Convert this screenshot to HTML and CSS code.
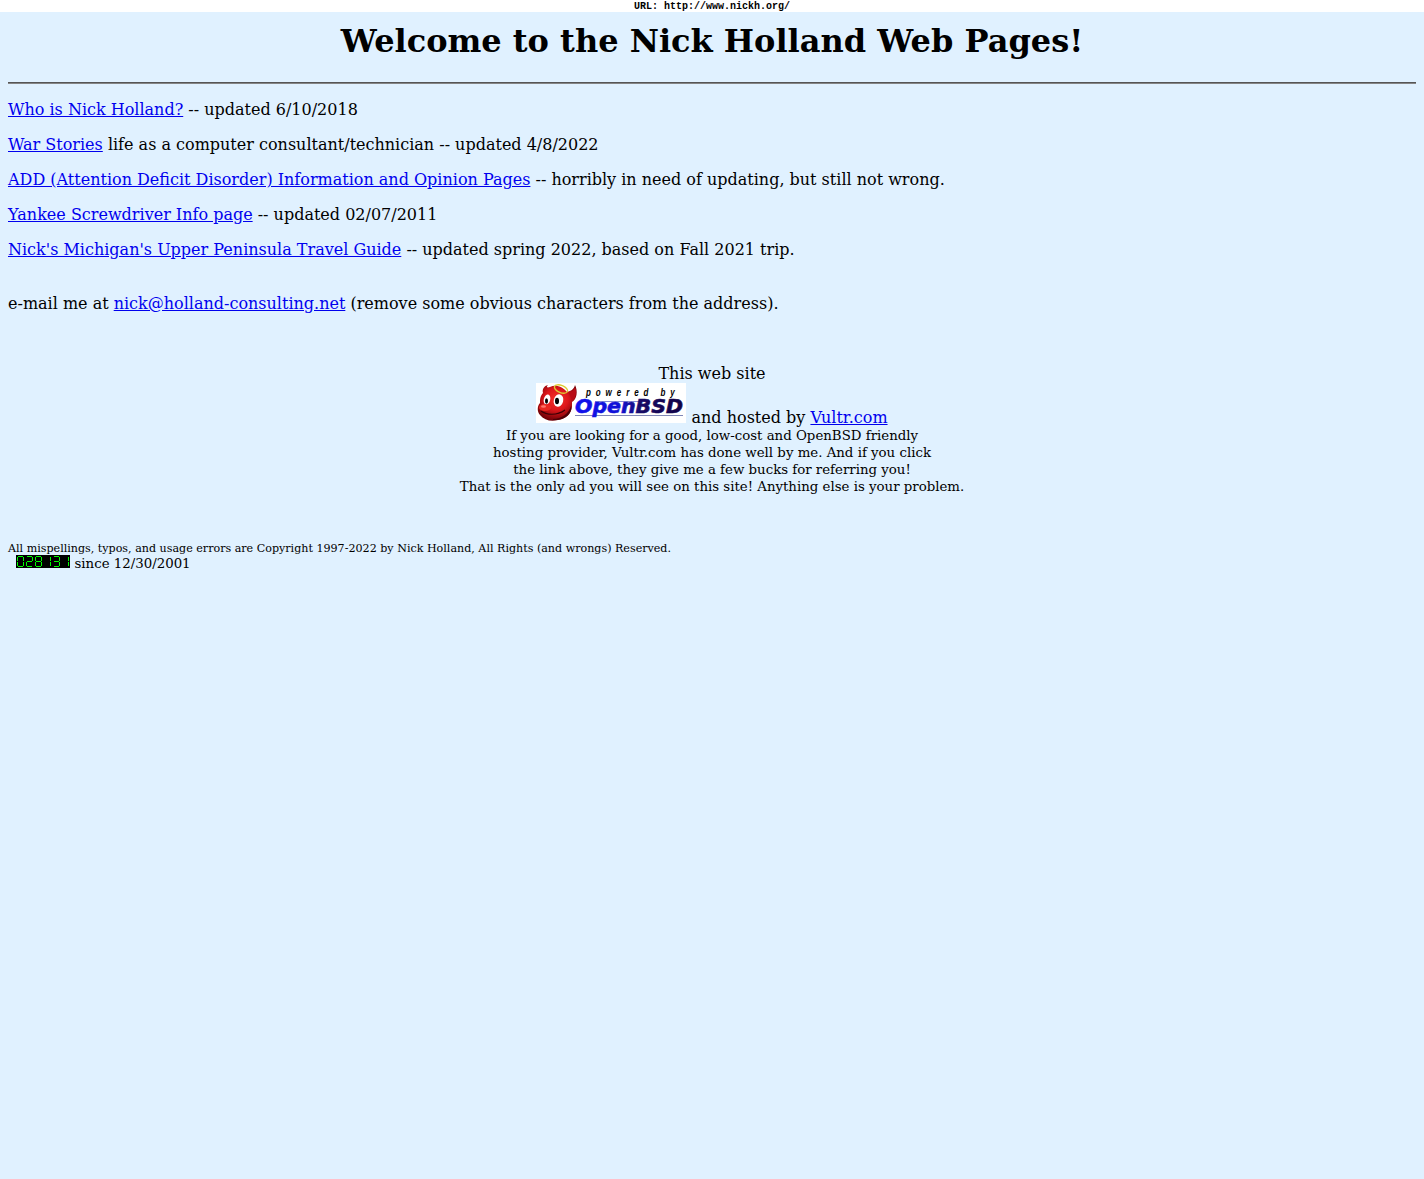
FILE: index.html
```html
<!DOCTYPE html>
<html lang="en">
<head>
<meta charset="utf-8">
<title>Nick Holland Web Pages</title>
<link rel="stylesheet" href="styles.css">
</head>
<body>
<header class="url">URL: http://www.nickh.org/</header>
<main class="page">
<h1 class="title">Welcome to the Nick Holland Web Pages!</h1>
<hr class="rule">
<p><a href="#">Who is Nick Holland?</a> -- updated 6/10/2018</p>
<p><a href="#">War Stories</a> life as a computer consultant/technician -- updated 4/8/2022</p>
<p><a href="#">ADD (Attention Deficit Disorder) Information and Opinion Pages</a> -- horribly in need of updating, but still not wrong.</p>
<p><a href="#">Yankee Screwdriver Info page</a> -- updated 02/07/2011</p>
<p><a href="#">Nick's Michigan's Upper Peninsula Travel Guide</a> -- updated spring 2022, based on Fall 2021 trip.</p>
<p class="email">e-mail me at <a href="#">nick@holland-consulting.net</a> (remove some obvious characters from the address).</p>
<section class="hosting">
<div>This web site</div>
<div class="powered"><svg class="logo" width="150" height="40" viewBox="0 0 150 40">
<defs>
<radialGradient id="skin" cx=".48" cy=".4" r=".6"><stop offset="0" stop-color="#f5332b"/><stop offset=".5" stop-color="#dd171b"/><stop offset="1" stop-color="#700007"/></radialGradient>
<linearGradient id="ink" x1="39" x2="148" y1="0" y2="0" gradientUnits="userSpaceOnUse"><stop offset="0" stop-color="#1111ee"/><stop offset=".42" stop-color="#1111d5"/><stop offset=".6" stop-color="#180b65"/><stop offset="1" stop-color="#110044"/></linearGradient>
</defs>
<rect width="150" height="40" fill="#fff"/>
<path d="M39 32.5H147" stroke="#8187b6" stroke-width="1.2"/>
<path d="M59 18.5H114" stroke="#8589d2" stroke-width="1"/>
<path d="M12 2C8 3 6 6 7 10C4 13 4 17 4 20C1 23 1 29 4 32C8 37 15 39 22 37C30 36 35 31 36 24L36 19C41 16 42 8 39 2C38 6 35 8 31 9C27 4 20 1 14 4C11 5 10 4 12 2Z" fill="url(#skin)"/>
<path d="M33 10C36 9 38 7 39 4C41 9 40 15 36 18C35 15 34 12 33 10Z" fill="#b90c14"/>
<path d="M5 28C10 32 21 33 29 27" fill="none" stroke="#390006" stroke-width="1.1"/>
<path d="M17 36C26 36 33 30 35 23C37 30 29 38 17 37Z" fill="#4c0007"/>
<ellipse cx="11" cy="16.5" rx="3.2" ry="5.2" fill="#fff" transform="rotate(14 11 16.5)"/>
<ellipse cx="22.5" cy="17.5" rx="4.7" ry="6.3" fill="#fff" transform="rotate(15 22.5 17.5)"/>
<ellipse cx="10.5" cy="18" rx="1.5" ry="2.8"/>
<ellipse cx="21" cy="18" rx="2" ry="3.2"/>
<ellipse cx="9" cy="24.5" rx="6" ry="3.6" fill="#e92821"/>
<ellipse cx="7.5" cy="23.5" rx="2.5" ry="1.3" fill="#ff776b"/>
<ellipse cx="25" cy="6" rx="7" ry="3.6" fill="none" stroke="#dccb32" stroke-width="1.3" transform="rotate(22 25 6)"/>
<text class="powered-label" transform="translate(50 12.5) scale(.8 1)" x="0" y="0" textLength="111">powered by</text>
<text class="brand" x="39" y="30.3" textLength="108" lengthAdjust="spacingAndGlyphs" fill="url(#ink)" stroke="url(#ink)" stroke-width=".6">OpenBSD</text>
</svg> and hosted by <a href="#">Vultr.com</a></div>
<div class="referral">If you are looking for a good, low-cost and OpenBSD friendly<br>hosting provider, Vultr.com has done well by me. And if you click<br>the link above, they give me a few bucks for referring you!<br>That is the only ad you will see on this site! Anything else is your problem.</div>
</section>
<footer>
<div class="copyright">All mispellings, typos, and usage errors are Copyright 1997-2022 by Nick Holland, All Rights (and wrongs) Reserved.</div>
<div class="visits"><svg class="counter" width="54" height="13" viewBox="0 0 54 13" role="img" aria-label="028131">
<defs>
<path id="top" d="M2 1.5H7"/><path id="middle" d="M2 6.5H7"/><path id="bottom" d="M2 11.5H7"/>
<path id="upper-left" d="M1.5 2V6"/><path id="lower-left" d="M1.5 7V11"/>
<path id="upper-right" d="M7.5 2V6"/><path id="lower-right" d="M7.5 7V11"/>
<g id="one"><use href="#upper-right"/><use href="#lower-right"/></g>
</defs>
<rect width="54" height="13"/>
<g stroke="#00ff00" shape-rendering="crispEdges">
<g><use href="#top"/><use href="#bottom"/><use href="#upper-left"/><use href="#lower-left"/><use href="#one"/></g>
<g transform="translate(9)"><use href="#top"/><use href="#middle"/><use href="#bottom"/><use href="#upper-right"/><use href="#lower-left"/></g>
<g transform="translate(18)"><use href="#top"/><use href="#middle"/><use href="#bottom"/><use href="#upper-left"/><use href="#lower-left"/><use href="#one"/></g>
<use href="#one" x="27"/>
<g transform="translate(36)"><use href="#top"/><use href="#middle"/><use href="#bottom"/><use href="#one"/></g>
<use href="#one" x="45"/>
</g>
</svg><span>since 12/30/2001</span></div>
</footer>
</main>
</body>
</html>
```
FILE: styles.css
```css
body {
  margin: 0;
  min-height: 100vh;
  background: #e0f1ff;
  color: #000;
  font: 16px/19px "DejaVu Serif", serif;
}
.url {
  height: 12px;
  background: #fff;
  text-align: center;
  font: bold 10px/14px "Liberation Mono", monospace;
}
.page { padding: 11px 8px 0; }
.title {
  margin: 0 0 22px;
  font-size: 32px;
  line-height: 37px;
  text-align: center;
}
.rule {
  height: 2px;
  margin: 0 0 16px;
  border: 0;
  background: linear-gradient(#555 50%, #858585 50%);
}
p { margin: 0 0 16px; }
a { color: #0000ee; }
.email { margin: 35px 0 51px; }
.hosting { text-align: center; }
.powered { height: 44px; }
.logo { vertical-align: baseline; }
.powered-label {
  font: italic bold 10px "Liberation Sans", sans-serif;
}
.brand { font: italic bold 19px "DejaVu Sans", sans-serif; }
.referral { font-size: 13.333px; line-height: 17px; }
footer { margin-top: 46px; }
.copyright { padding-top: 1px; font-size: 11.11px; line-height: 13px; }
.visits {
  display: flex;
  gap: 4.5px;
  padding-left: 8px;
  font-size: 13.333px;
  line-height: 17px;
}
```
